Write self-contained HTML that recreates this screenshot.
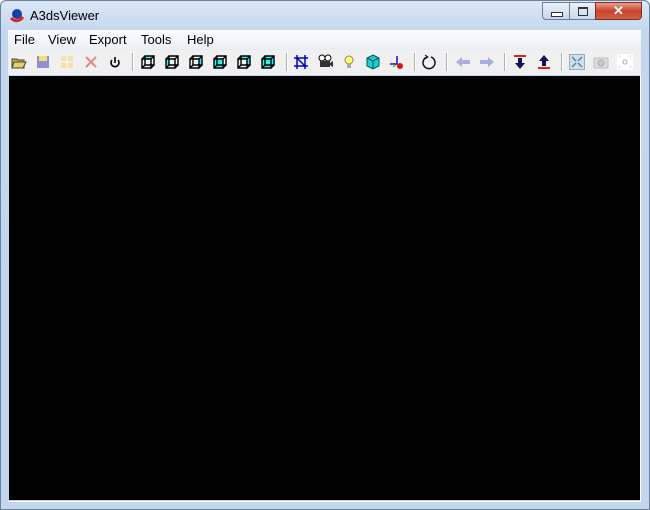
<!DOCTYPE html><html><head><style>
body{margin:0;width:650px;height:510px;overflow:hidden;font-family:"Liberation Sans",sans-serif;}
#win{position:absolute;left:0;top:0;width:648px;height:508px;border:1px solid #6d8199;border-radius:6px 6px 0 0;background:linear-gradient(#dbe8f6,#c3d7ee 30px,#c2d6ee);}
.t{position:absolute;left:29px;top:7px;font-size:13px;color:#000;}
.mb{position:absolute;left:8px;top:30px;width:633px;height:20px;background:linear-gradient(#fbfcfe,#e9eef6);font-size:13px;}
.mb span{position:absolute;top:2px;}
.tb{position:absolute;left:8px;top:50px;width:633px;height:25px;background:#f0f0f0;}
.blk{position:absolute;left:9px;top:76px;width:631px;height:424px;background:#000;}
.wl{position:absolute;left:8px;top:75px;width:633px;height:427px;border-bottom:1px solid #fff;border-right:1px solid #fff;box-sizing:border-box;}
.ic{position:absolute;top:54px;width:16px;height:16px;}
.sep{position:absolute;top:53px;width:1px;height:18px;background:#b0b0b0;border-right:1px solid #fff;}
.cb{position:absolute;top:1px;height:18px;border:1px solid #6d7e95;background:linear-gradient(#e9f0f8,#c8d8ec);box-sizing:border-box;}
</style></head><body><div id="win">
<svg style="position:absolute;left:8px;top:7px" width="16" height="16"><circle cx="8" cy="6" r="5" fill="#1a3fa8"/><path d="M2 10 Q8 16 14 9" stroke="#d22" stroke-width="3" fill="none"/></svg>
<div class="t">A3dsViewer</div>
<div class="cb" style="left:541px;width:28px;border-radius:0 0 0 4px"><div style="position:absolute;left:8px;top:9px;width:10px;height:3px;border:1px solid #333;background:#fff"></div></div>
<div class="cb" style="left:568px;width:27px"><div style="position:absolute;left:8px;top:4px;width:8px;height:6px;border:1px solid #333;border-top-width:2px"></div></div>
<div class="cb" style="left:594px;width:47px;background:linear-gradient(#e8a08f,#c7442d 50%,#d0614a);border-color:#8a2a1e;border-radius:0 0 4px 0;color:#fff;font-weight:bold;font-size:13px;text-align:center;line-height:16px">✕</div>
</div>
<div class="mb"><span style="left:6px">File</span><span style="left:40px">View</span><span style="left:81px">Export</span><span style="left:133px">Tools</span><span style="left:179px">Help</span></div>
<div class="tb"></div>
<svg class="ic" style="left:11px" viewBox="0 0 16 16"><path d="M1 5h5l1 1h6v8H1z" fill="#c9b24a" stroke="#444"/><path d="M3 8h12l-3 6H1z" fill="#e6d264" stroke="#444"/></svg>
<svg class="ic" style="left:35px" viewBox="0 0 16 16"><rect x="2" y="2" width="12" height="12" fill="#8f8fd6"/><rect x="4" y="2" width="8" height="5" fill="#f0e070"/></svg>
<svg class="ic" style="left:59px" viewBox="0 0 16 16"><rect x="2" y="2" width="12" height="12" fill="#f3e2b0"/><path d="M8 2v12M2 8h12" stroke="#fff"/></svg>
<svg class="ic" style="left:83px" viewBox="0 0 16 16"><path d="M3 3l10 10M13 3L3 13" stroke="#e08a80" stroke-width="2"/></svg>
<svg class="ic" style="left:107px" viewBox="0 0 16 16"><path d="M5 6a4 4 0 1 0 6 0M8 3v6" stroke="#000" stroke-width="1.6" fill="none"/></svg>
<div class="sep" style="left:132px"></div>
<svg width="0" height="0"><defs><g id="cu" stroke-width="1.4"><path d="M5 2h9v9H5z" fill="none" stroke="#000"/><path d="M2 5h9v9H2z" fill="none" stroke="#000"/><path d="M2 5l3-3M11 5l3-3M11 14l3-3M2 14l3-3" stroke="#000"/></g></defs></svg>
<svg class="ic" style="left:140px" viewBox="0 0 16 16"><path d="M2 5l3-3h9l-3 3z" fill="#3ee"/><use href="#cu"/></svg>
<svg class="ic" style="left:164px" viewBox="0 0 16 16"><path d="M2 5l3-3v9l-3 3z" fill="#3ee"/><use href="#cu"/></svg>
<svg class="ic" style="left:188px" viewBox="0 0 16 16"><path d="M11 5l3-3v9l-3 3z" fill="#3ee"/><use href="#cu"/></svg>
<svg class="ic" style="left:212px" viewBox="0 0 16 16"><rect x="2" y="5" width="9" height="9" fill="#3ee"/><use href="#cu"/></svg>
<svg class="ic" style="left:236px" viewBox="0 0 16 16"><path d="M11 5l3-3v9l-3 3zM2 5l3-3h9l-3 3z" fill="#3ee"/><use href="#cu"/></svg>
<svg class="ic" style="left:260px" viewBox="0 0 16 16"><path d="M2 5l3-3h9v9l-3 3H2z" fill="#3ee"/><use href="#cu"/></svg>
<div class="sep" style="left:286px"></div>
<svg class="ic" style="left:293px" viewBox="0 0 16 16"><path d="M1 4h14M1 12h14M4 1v14M12 1v14M4 4l8 8" stroke="#00c" stroke-width="1.5" fill="none"/></svg>
<svg class="ic" style="left:317px" viewBox="0 0 16 16"><circle cx="5" cy="4" r="3" fill="#fff" stroke="#000"/><circle cx="11" cy="4" r="3" fill="#fff" stroke="#000"/><rect x="3" y="7" width="10" height="6" fill="#333"/><path d="M13 9l3-2v6l-3-2" fill="#333"/></svg>
<svg class="ic" style="left:341px" viewBox="0 0 16 16"><circle cx="8" cy="6" r="4" fill="#ff6" stroke="#886"/><rect x="6" y="10" width="4" height="4" fill="#aaa"/></svg>
<svg class="ic" style="left:365px" viewBox="0 0 16 16"><path d="M8 1l6 3v8l-6 3-6-3V4z" fill="#2cc" stroke="#055"/><path d="M2 4l6 3 6-3M8 7v8" stroke="#055" fill="none"/></svg>
<svg class="ic" style="left:389px" viewBox="0 0 16 16"><path d="M8 2v9M1 10h7" stroke="#11c" stroke-width="1.5"/><circle cx="11" cy="12" r="3" fill="#d11"/><path d="M8 10l-4 3" stroke="#2a2"/></svg>
<div class="sep" style="left:414px"></div>
<svg class="ic" style="left:422px" viewBox="0 0 16 16"><path d="M5 3a6 6 0 1 0 4 0" stroke="#112" stroke-width="1.5" fill="none"/><path d="M3 1l3 2-3 2" stroke="#112" fill="none"/></svg>
<div class="sep" style="left:446px"></div>
<svg class="ic" style="left:455px" viewBox="0 0 16 16"><path d="M1 8l6-5v3h8v4H7v3z" fill="#a9aedd"/></svg>
<svg class="ic" style="left:479px" viewBox="0 0 16 16"><path d="M15 8L9 3v3H1v4h8v3z" fill="#a9aedd"/></svg>
<div class="sep" style="left:504px"></div>
<svg class="ic" style="left:512px" viewBox="0 0 16 16"><rect x="2" y="1" width="12" height="2" fill="#d22"/><path d="M6 4h4v5h3l-5 6-5-6h3z" fill="#115"/></svg>
<svg class="ic" style="left:536px" viewBox="0 0 16 16"><rect x="2" y="13" width="12" height="2" fill="#d22"/><path d="M6 12h4V7h3L8 1 3 7h3z" fill="#115"/></svg>
<div class="sep" style="left:561px"></div>
<svg class="ic" style="left:569px" viewBox="0 0 16 16"><rect x="0.5" y="0.5" width="15" height="15" fill="#cfe0ea" stroke="#9ab"/><path d="M3 3l4 4M13 3l-4 4M3 13l4-4M13 13l-4-4" stroke="#4a8ab0" stroke-width="1.5"/></svg>
<svg class="ic" style="left:593px" viewBox="0 0 16 16"><rect x="1" y="4" width="14" height="10" fill="#ddd" stroke="#bbb"/><circle cx="8" cy="9" r="3" fill="#ccc" stroke="#aaa"/></svg>
<svg class="ic" style="left:617px" viewBox="0 0 16 16"><rect x="0" y="0" width="16" height="16" fill="#fff"/><circle cx="8" cy="8" r="2" fill="none" stroke="#aaa"/><path d="M2 2h1M13 2h1M2 13h1M13 13h1" stroke="#aaa"/></svg>
<div class="wl"></div>
<div class="blk"></div>
</body></html>
